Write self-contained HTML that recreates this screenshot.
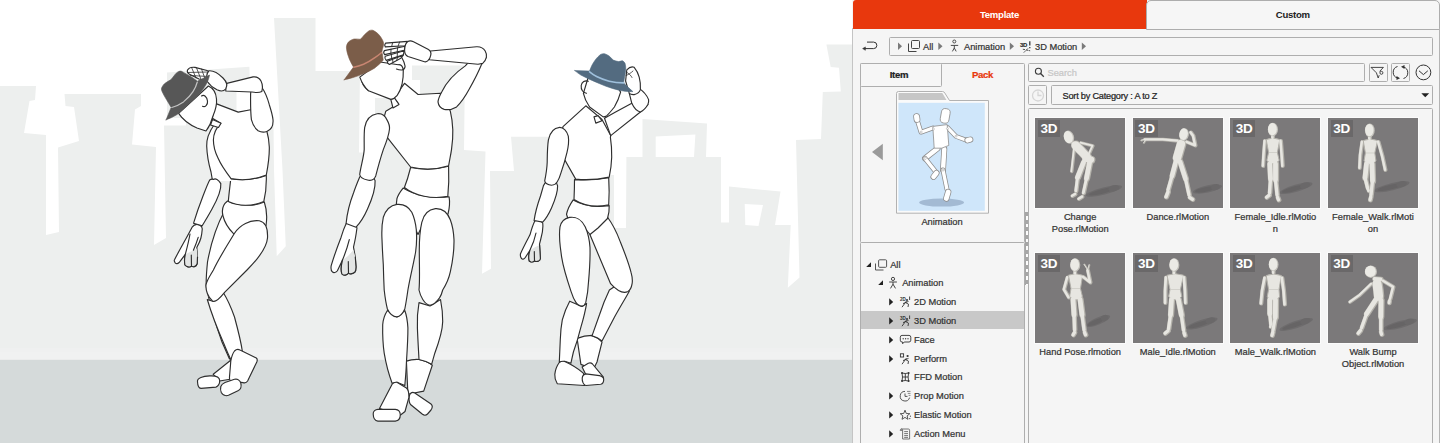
<!DOCTYPE html>
<html lang="en">
<head>
<meta charset="utf-8">
<title>Content Manager</title>
<style>
*{box-sizing:border-box;margin:0;padding:0}
html,body{width:1440px;height:443px;overflow:hidden;background:#fff;font-family:"Liberation Sans",Arial,sans-serif;font-size:11px;color:#333}
#stage{position:absolute;left:0;top:0;width:1440px;height:443px;overflow:hidden}
#scene{position:absolute;left:0;top:0;width:852px;height:443px}
#panel{position:absolute;left:852px;top:0;width:588px;height:443px;background:#f5f5f5;}
.abs{position:absolute}
.tab{position:absolute;top:0;height:29px;line-height:29px;text-align:center;font-weight:bold;font-size:9.6px;letter-spacing:-0.3px}
#tabT{left:0.5px;width:294px;background:#e8380d;color:#fff;border-radius:3px 0 0 0}
#tabC{left:294px;width:293.5px;height:30px;background:#f6f6f6;color:#222;border:1px solid #adadad;border-radius:5px 5px 0 0;line-height:27px}
.box{position:absolute;border:1px solid #aeaeae;background:#f5f5f5;border-radius:1.5px}
.t{position:absolute;white-space:nowrap;line-height:14px;height:14px;font-size:9.3px;letter-spacing:-0.02px;-webkit-text-stroke:0.22px currentColor}
.bd{font-weight:bold;font-size:9.6px;letter-spacing:-0.3px}
.row{position:absolute;left:8px;width:164px;height:18px}
.lbl{position:absolute;width:98px;text-align:center;line-height:11.7px;font-size:9.3px;color:#333;margin-top:0.5px;-webkit-text-stroke:0.22px currentColor}
.th{position:absolute;width:90px;height:89.6px;background:#7b797a;overflow:hidden;outline:1px solid #fbfbfb}
.th b{position:absolute;left:2.5px;top:1.8px;width:22.3px;height:17.6px;background:#6a6869;color:#fff;font-size:13.5px;line-height:18.8px;text-align:center;font-weight:bold;letter-spacing:-0.3px}
</style>
</head>
<body>
<div id="stage">
<!-- SCENE -->
<svg id="scene" width="852" height="443" viewBox="0 0 852 443">
<rect width="852" height="443" fill="#fff"/>
<!--SKYLINE-->
<path fill="#edefee" d="M0,86 L36,86 L35,100 L29.5,101 L24,133 L46,135 L46,235 L59,232 L58,147.5 L79,141 L74,107 L65.5,106 L64.5,94 L141,94 L141,106 L135,109.5 L132,144.5 L156,147 L154,245 L166,238 L164,125.5 L186,125.5 L186,118 L167,118 L167,72.4 L249.4,66.7 L249.8,86 L236.5,86 L236.5,125 L273.5,125 L274,170 L276.75,256.25 L285.75,246.25 L282.5,170 L274,18 L315.5,18 L315.5,71 L360,71 L359,152.5 L375,152.5 L375,98 L420,98 L420,80 L412,80 L412,65.5 L465,65.5 L464,150 L485.5,151.4 L482,273.75 L491,268.75 L490,171 L514,171 L511,136.7 L600,136.7 L600,175 L614,175 L614,228 L626,228 L626.4,157 L642.5,157 L642.5,119 L707,123.5 L706,157 L721,157 L721,222.5 L729,222.5 L729,186.5 L780.5,191.6 L775,225 L790.7,225 L787.8,287.7 L799.5,277.4 L796,140 L821,139 L822.8,92 L840.8,91.5 L839,67.7 L830.7,67 L826.4,44.6 L852,44.6 L852,360 L0,360 Z"/>
<path fill="#fff" d="M655.7,136.5 L695.4,134.5 L694,157 L655.7,157 Z M744.7,204 L763,205 L758.5,226 L745.3,225 Z"/>
<rect x="0" y="348" width="852" height="3.5" fill="#eff0f0"/><rect x="0" y="351.5" width="852" height="9" fill="#f0f1f1"/><rect x="0" y="359.8" width="852" height="84" fill="#d5dada"/>
<!--/SKYLINE-->
<!--FIGURES-->
<!--F1--><g id="fig1" fill="#fff" stroke="#2e2e2e" stroke-width="1.15" stroke-linejoin="round" stroke-linecap="round">
<!-- back leg -->
<path d="M224,212 C217,225 211,243 207.5,262 C206.5,272 206,280 206.2,286 L214,300 L240,260 L235,230 Z"/>
<path d="M206.3,287 C209,300 214,320 222,342 L229.5,359 L236,352 L224,295 Z"/>
<path d="M231,360 L213.2,374.3 L219.6,381 L231.5,379 Z"/>
<path d="M197.5,381.5 C197,377.8 203,376.2 209.7,375.9 C215,375.6 219.5,377 219.7,380.5 C219.9,384 217.8,386.6 215.9,387.1 L201,388.4 C198.5,388.2 197.6,384.5 197.5,381.5 Z"/>
<!-- pelvis, abdomen -->
<path d="M227.5,201 C223,204.5 221.5,210 223,216 C225,224 229,229 233.3,233.3 L238,238 L262,228 L266,226 C267.2,218 267,210 264.3,202 C255,206.5 240,206.5 227.5,201 Z"/>
<path d="M230.8,178.6 C245,181 256,179 266.3,175.4 C266.6,185 265.6,194 263.8,201.5 C252,206.8 238,206.3 228.3,201.5 C229,193 230,186 230.8,178.6 Z"/>
<!-- front leg -->
<path d="M207.3,299.5 L213.5,301.5 L223.5,293 C228,300 232,310 234.5,317 C238,330 241,342 242.3,351 L231,360 C228,354 226,349 224,344 C217,328 211,312 207.3,299.5 Z"/>
<path d="M234.5,233.3 C240,225 250,219.8 259.3,220.8 C265,222 268,228 267.5,238 C266.5,250 255,262 247,270 L224.6,292.3 C220,298 215,302.8 212.5,301 C208,297.5 205.5,290 206,284.8 C207,280 210,276 213.4,270 C219,258 228,244 234.5,233.3 Z"/>
<path d="M234.5,351 C236,349.5 238.5,349.2 240,350 L256.3,358 C257.5,359 257.4,360.5 256.8,362 L247.6,381 C246.6,382.6 245,383.2 243,382.6 L231,381 C229.6,380.5 229.3,379 229.5,377 L230.8,361 C231.5,357 233,353 234.5,351 Z"/>
<path d="M220.8,386.5 C221.5,384.5 223,383.4 225,382.5 L234.5,379.3 C237.5,378.5 240,380.4 240.8,383 C241.5,386 241,389 238.5,390.5 L228.5,395.3 C225.5,396.4 222.5,395 221.3,392.5 C220.5,390.5 220.3,388.5 220.8,386.5 Z"/>
<!-- hanging upper arm (behind chest) -->
<path d="M214,125 C209,132 206.5,140 206.7,146 C207,155 209,165 211,172 L212.5,181 L232,181 L222,160 L215,134 Z" stroke="none"/><path d="M214,125 C209,132 206.5,140 206.7,146 C207,155 209,165 211,172 L212.3,179.5" fill="none"/>
<!-- chest -->
<path d="M220.8,123.3 C216,128 213.5,133 213.4,140 C213.4,147 215,152 218,158 C221,165 226,172 231,178.6 C243,181 256,179 266.3,175 C268,166 269.5,155 269.3,147 C269,140 268,135 266.8,131 L258,112 L250.6,109.7 L238.2,112.1 L216,103.6 L212,118 Z"/>
<!-- hanging forearm & hand -->
<path d="M192.1,227.2 C194,224.5 197,223.8 199.5,225 C201.5,226 202.5,227.5 202.2,229.5 C202,232.5 201.5,235.5 200.9,238 C200,241.5 198.2,244.8 196.8,247.5 L197.5,257 L197.2,263.5 C196.5,266.5 193.5,267.3 191.5,266.3 C189.5,267.5 186.5,267 185,265 C184.2,262 184.5,258 185.3,254.3 L179.5,262.2 C178,264 176.2,264 175.2,262.8 C174.2,261.5 174,260.5 174.5,259.7 C180,249 186.5,238 192.1,227.2 Z"/>
<path d="M185.3,254.3 L191,251.5 L196.8,248.5 L197.5,257 L197.2,263.5 C196.5,266.5 193.5,267.3 191.5,266.3 C189.5,267.5 186.5,267 185,265 C184.2,262 184.5,258 185.3,254.3 Z" fill="#e3e5e4" stroke="none"/>
<path d="M190,234 C188.8,241 187,248 185.3,254.3 M198.2,237.3 C196.8,242 195,246.5 193.4,250.2 M191.3,255 L191.5,266.3 M185.3,254.3 C184.5,258 184.2,262 185,265 C186.5,267 189.5,267.5 191.5,266.3 C193.5,267.3 196.5,266.5 197.2,263.5 L197.5,257" fill="none"/>
<path d="M213.4,179.4 C215.5,178 218.5,179.5 220.8,183.6 C221.5,190 217,200 212,209 C208.5,215.5 205,221 202.2,225.8 L193.5,223.3 C196,215 199.5,205 203,196 C205.5,189.5 208,183 209.7,180 C211,179 212,179 213.4,179.4 Z"/>
<!-- neck, head -->
<path d="M212.5,119.5 L221,123.2 L218.5,127.5 L210.5,125 Z"/>
<path d="M178.6,113.4 C183,120 190,125 197,128 L206,131 C209,127 211.5,122 213,116 C215.5,110 217,104 216.5,99 C216,93 213,88 208.4,86 Z"/>
<path d="M201.5,96 C204,94 207,97 207.5,101 C208,105 205,107.5 202.5,106.3" fill="none"/>
<!-- raised arm -->
<path d="M250.6,94.8 C250.5,90 252,86.5 255,85 L261.8,87.3 C265,92 267.5,98 269.3,104.7 C271,110 272.5,115 273,119.6 C273.5,126 271,130 266.8,131.5 C263.5,132.6 260.5,132 258.1,130.8 C254.5,128 252.5,124 251.4,119.6 C250.5,112 250.5,103 250.6,94.8 Z"/>
<path d="M225.8,83.6 L253.1,76.9 C256.5,76.5 259.5,78 261,81 C262.5,84 262.8,88 261.8,91.5 C259,93 255,92.6 251.9,92 L225.8,91 Z"/>
<path d="M187.5,70 C189,67.6 192,67 195,67.4 L207,70.5 C209.5,71.5 210.2,74 209.2,76 L206,80.5 L199,79 L190,74.5 C188,73.5 187,71.5 187.5,70 Z"/>
<path d="M191.5,67.3 L196,78 M196.5,67.8 L201,79.3 M201.5,69 L205.5,80 M188,72.5 L207.5,72 M190.5,75.5 L208.5,76.5" fill="none" stroke-width="0.8"/>
<path d="M209,70.8 C213,70.5 219,74 223,78 C226.6,81.6 227.6,86 225.6,89 C223.6,91.5 220,91.2 217,89.8 C213,87.8 209.5,84.8 207.3,81.5 C206,79 206.5,73 209,70.8 Z"/>
<!-- hat -->
<path d="M166.1,119.8 L171.2,107.4 C168,102 164,96 162.1,91.6 C161.3,89.5 161.3,88.5 161.8,87.5 C162.5,86 163.5,84.5 164.5,83.7 C166.5,82 169,80.8 170.8,79.8 C172,78.5 173,77 174,75.8 C175.3,74 177,72.2 178.7,71.4 C179.8,71 181,71 181.9,71.4 C183.5,72.3 185,73.3 186.6,74.2 C188.5,75.2 190.3,76.3 192.2,77.4 L197.4,81.3 C201,79.5 205.5,77 209.5,75 C209,78.5 207.5,82 205.6,85.3 C203.8,88.3 201.5,91.2 199.3,94 C195.5,98.2 191,102.2 186.6,105.8 C183.5,108.8 180.3,111.8 177.1,114.5 C173.5,116.8 170,118.5 166.1,119.8 Z" fill="#575757" stroke="#575757" stroke-width="0.6"/>
<path d="M197.3,82 C196.5,85 195,88.5 193,91.6 C190.5,95.5 187,99 183.5,101.9 C180,104.3 176,106.2 171.8,107.5" fill="none" stroke="#c4c4c4" stroke-width="1.2"/>
</g>
<!--/F1-->
<!--F2--><g id="fig2" fill="#fff" stroke="#2e2e2e" stroke-width="1.15" stroke-linejoin="round" stroke-linecap="round">
<!-- pelvis, abdomen -->
<path d="M403.1,188.1 C400,192 397.5,196 396.9,199 C396,203 396,208 397,212 L412,222 L418,234.5 L424,222 L448,214 C449.5,208 450,202 449.1,196.8 C434,199 416,196 403.1,188.1 Z"/>
<path d="M410.6,167.5 C423,170 437,169.5 448.6,166.3 C449,176 448.8,187 447.8,196.4 C432,199.5 415,196 404.4,187.5 C407,181 409,174 410.6,167.5 Z"/>
<!-- back (right) leg -->
<path d="M406.4,361.1 C410,359.8 415,359.3 419,359.5 C424,360.5 429,362.5 432.3,365.2 L423.7,391.1 L407.9,394.3 Z"/>
<path d="M409.8,394.5 C411,392.5 413,392 414.8,393 L431,404 C432.6,405.5 432.4,408 431,410 L427.5,414 C426,415.5 424,415.4 422.5,414.3 L410.5,404.5 C408.8,402.5 408.6,397 409.8,394.5 Z"/>
<path d="M419,302.6 C417.5,311 417,320 417.4,327.9 C417.8,339 418.5,350 419,359.5 C424,360.5 428.5,362.3 431.6,364.3 L434.8,353.2 C439,342 442.5,331 442.7,321.6 C442.8,314 441.8,306 440.5,299.5 L430,306 Z"/>
<path d="M435.4,208.6 C428,209.5 423.5,215 421.8,222.3 C420,230 419.3,240 419.3,250 C419.3,265 420,280 419,290 C420,294.5 421.5,297.5 422.8,299.5 C425,303 427.5,305 430,305.2 C433.5,305 437,301.5 439.5,297.9 C441,295.5 442,293 442.7,290 C446.5,284 449,278 450.3,271.9 C452.5,262 454.2,250 454,239.6 C453.6,232 452.3,225 450.3,219.8 C447.5,212.5 442,208.2 435.4,208.6 Z"/>
<!-- front (left) leg -->
<path d="M387.4,310.5 C384.5,315 383,320 382.7,324.8 C382.5,335 383,345 384.2,353.2 C386,364 389,375 392.1,383.2 L397,382.2 L404.8,385.5 C405.5,378 406.2,370 406.4,362.7 C407.2,350 408,338 407.9,327.9 C407.5,321 406.5,315 404.8,310.5 L396.9,317 Z"/>
<path d="M396.9,204.4 C390,205.5 385.5,210.5 383.3,217.3 C381.8,224 381.6,232 382,239.6 C382.3,248 382.8,257 383.3,264.5 C383.5,273 383.8,282 384.2,290 C385,297 386,303.5 387.4,309 C389.5,313.5 393,316.8 396.9,316.9 C400.5,316.5 403,313 404.8,309 C406,303 407,296.5 407.9,290 C410,277.5 413.5,264 415.6,252 C416.8,244 416.8,236.5 416.3,229.7 C415.5,222.5 413.8,216.5 411.8,212.3 C408.5,206.5 403,203.8 396.9,204.4 Z"/>
<path d="M392.1,384.2 C393.5,382.5 395.3,382 396.9,382.3 L406.4,388 C408.2,389.5 409,393.5 408.9,397.4 L405,411.5 L400.5,415 L379.5,408.5 Z"/>
<path d="M373.2,414 C373,411.2 375.5,409.5 377.9,409.4 L395.3,409.4 C398.3,409.6 400.2,412 400.3,414.8 C400.3,418 398.5,420.8 395.3,421.1 L377.9,421.1 C375,420.8 373.3,417.5 373.2,414 Z"/>
<!-- chest -->
<path d="M398.2,103.7 L385.8,111.2 L382,125 L387,137.2 L410.6,167 C423,170 437,169.5 448.6,165.8 C450,158 451.2,152 451.5,149.6 C452.5,143 453,136 452.8,129.8 C452.5,123 451.5,116 450.3,111.2 L444,96 L440.5,93.3 L418.1,94.5 L404.5,83.3 L394,98 Z"/>
<!-- hanging arm -->
<path d="M346.1,223.8 C349,222 353,222.8 355.5,225 C357,226.5 357.2,228 356.7,229.7 C356,236 354.8,241.5 353.5,247.1 L355.3,257 L356,266.9 C356,270 355.5,271.5 354.7,272.3 C352.5,274 350,274 348.5,273.2 C346.5,275.5 343.5,275.8 342,274 C340.8,271 341.2,265 342.5,260 L337.4,270.7 C336,272.8 333.5,273 332.4,271.9 C331,270.5 330.8,268 331.2,265.7 C334,256 337.5,246.5 341.1,237.2 C342.5,232.5 344,228 346.1,223.8 Z"/>
<path d="M342.5,260 L348,256 L353.5,250 L355.3,257 L356,266.9 C356,270 355.5,271.5 354.7,272.3 C352.5,274 350,274 348.5,273.2 C346.5,275.5 343.5,275.8 342,274 C340.8,271 341.2,265 342.5,260 Z" fill="#e3e5e4" stroke="none"/>
<path d="M349.3,239.6 C347.5,247 345,254 342.5,260 M348.3,261.5 L348.5,273.2 M342.5,260 C341.2,265 340.8,271 342,274 C343.5,275.8 346.5,275.5 348.5,273.2 C350,274 352.5,274 354.7,272.3 C355.5,271.5 356,270 356,266.9 L355.3,257" fill="none"/>
<path d="M367.2,174 C369.5,173 373,175 375.1,180.7 C375.5,187 372,199 367.5,209 C364,217 360,223 356,227.2 L346.1,223.5 C347,214 350,202 353.5,193 C355.5,187 358,181 359.7,177 C361.5,174.5 364.5,173.5 367.2,174 Z"/>
<path d="M377.1,113.7 C381.5,113 385,115.5 387,119.9 C389,123.5 389.8,126 389.5,129 C388.8,136 386,143 383.3,149.6 C380.5,158 378,167 375.8,175.7 C374.5,179.5 371,181 367.5,180 C363,179 360,176.5 359.7,174.5 C360.8,166 363.8,157 364.2,149.6 C364.3,142 363.8,134 364.7,127.3 C366,120 370.5,114.8 377.1,113.7 Z"/>
<!-- neck, head -->
<path d="M390.8,99.4 L394.6,98.2 L399,104.4 L393,108 Z"/>
<path d="M361.8,81.6 C363,85 365.5,88.5 368.5,90.7" fill="none"/>
<path d="M359.8,77.1 C361.5,82 364.5,87 368.5,90.7 L390.8,99.4 C393.5,99 395.5,97.5 397,95.7 C399.5,92 401,88.5 402,84.5 C403,79.5 403.5,74.5 403.3,69.6 C402.5,66 400.5,64.5 398.3,64.7 L380,62 Z"/>
<path d="M401.9,57.7 C403.5,60.5 404.8,63.5 405.1,66.3 C405,68.5 403.8,69.6 402.4,69.9 C400.3,70.1 398.2,69.7 396.5,69" fill="none"/>
<!-- raised arm -->
<path d="M465.3,65.9 C455,73 446,83 441.7,92 C439.5,96 438.3,99 438,101.9 C438.5,106 441,108.5 444.2,109.4 C448.5,110.2 453,109 456.6,106.9 C461.5,102 465.5,96 469,89.5 C473.5,81.5 478,73 481.4,64.7 L486.4,57.2 L478,52 Z"/>
<path d="M430.6,51 L476.5,46.8 C480,46.6 483.5,48.2 485.2,51 C486.6,53.5 486.8,55.5 486.4,57.2 C485.8,60 484.5,62 482.7,63.4 L478,64.2 L429.3,59.7 Z"/>
<path d="M407.5,41.4 L385.6,43.1 Q383.9,45.0 385.3,46.9 L405.3,45.7 Z"/><path d="M399.6,42.0 L398.1,46.1" fill="none" stroke-width="0.9"/><path d="M392.6,42.6 L391.7,46.5" fill="none" stroke-width="0.9"/><path d="M405.1,46.2 L384.4,50.6 Q382.9,52.6 384.6,54.6 L404.3,50.3 Z"/><path d="M397.6,47.8 L397.2,51.8" fill="none" stroke-width="0.9"/><path d="M391.0,49.2 L390.9,53.2" fill="none" stroke-width="0.9"/><path d="M404.2,50.7 L385.2,56.2 Q384.1,58.3 386.2,60.4 L403.4,54.9 Z"/><path d="M397.4,52.7 L397.2,56.9" fill="none" stroke-width="0.9"/><path d="M391.3,54.4 L391.7,58.6" fill="none" stroke-width="0.9"/><path d="M403.2,55.3 L387.4,61.2 Q386.8,62.8 389.4,64.4 L400.8,58.2 Z"/><path d="M397.5,57.4 L396.7,60.4" fill="none" stroke-width="0.9"/><path d="M392.5,59.3 L393.0,62.4" fill="none" stroke-width="0.9"/>
<path d="M407.8,41.5 C409.5,40.6 411.5,40.8 413.5,41.8 L428,49.3 C430.5,50.8 431.3,53 430.8,55 C430.3,57.5 429.3,59.8 427.7,60.9 C426.5,61.9 425.5,62 424.5,61.7 L408,56.5 C405.5,55.3 404.5,52.5 404.6,50 C404.7,46.5 405.8,43 407.8,41.5 Z"/>
<!-- hat -->
<path d="M344.2,79.8 L353.5,67.1 C351.5,63.5 349.5,60 348.4,56.4 C347.2,53 346.5,50 346.4,46.9 C346.6,45 347.3,43.3 348.4,42.1 C350,40.5 352,39.5 354,39 C356,38.7 358.3,39.2 360.3,39.3 C361.8,38 363,36.4 364.2,35 C365.8,33.5 367.3,32 369,30.8 C370.3,30.1 371.7,30 372.9,30.3 C375,31.2 376.9,32.6 378.5,34.2 C380,35.8 381.3,37.7 382.4,39.8 C383.1,41 383.5,42.3 383.7,43.7 C383.6,45.6 383,47.4 382.4,49.2 L381.8,52.4 L382.4,54 L383.2,60.3 C380.5,63.2 377.6,65.8 374.5,68.2 C371,70.3 367.3,72.2 363.5,73.8 C359.9,75.3 356.2,76.6 352.4,77.7 C349.7,78.5 347,79.2 344.2,79.8 Z" fill="#7b5d49" stroke="#7b5d49" stroke-width="0.6"/>
<path d="M353.8,67.2 C357.2,66.5 360.4,65.5 363.5,64.3 C367.4,62.6 371,60.4 374.5,57.9 C377,56.2 379.5,54.4 381.7,52.5" fill="none" stroke="#c98672" stroke-width="1.5"/>
</g>
<!--/F2-->
<!--F3--><g id="fig3" fill="#fff" stroke="#2e2e2e" stroke-width="1.15" stroke-linejoin="round" stroke-linecap="round">
<!-- back (right) leg -->
<path d="M577.1,338.4 C582,336.5 587,335.5 592,335.4 C596,336.8 599.5,339.3 602,342.1 L597,362 L593.3,369.4 L580.9,364.4 Z"/>
<path d="M582.1,366.9 L588.3,363.2 C590,362.5 591.5,363 592.5,364 L603.2,376.8 C603.8,378.5 603.5,380.5 602,381.8 L590,383 Z"/>
<path d="M609.4,290 C605.5,298 602,307 599.5,314.8 C597,322 594.5,329 592,335.9 C596,336.8 599.5,338.8 602,340.9 L614.4,317.3 C619.5,308 625,299 629.3,291.2 L620,283 Z"/>
<path d="M607.4,217 C612.5,224 617,233 620,241.1 C624,251 628.5,262 631.1,272.7 C632.3,277 632.6,281 632.1,283.7 C631.5,287.5 630,290.3 628,291.6 C625,293 621.5,292.3 618.5,290.5 C615.5,288.5 612.5,286 610.6,283.7 L590,234.8 L594,214 Z"/>
<!-- pelvis, abdomen -->
<path d="M573.2,199.9 C570,204.5 567.5,209.5 566.5,214.3 L569,222 L583,226 L590,234.5 L598,228 L607.5,218.5 C608.8,214 609.4,209.5 609.2,205.6 C596,207.5 583,205.5 573.2,199.9 Z"/>
<path d="M574.5,179.6 C586,180.5 598,179.5 608.7,177.6 C609.3,187 609.3,196 608.7,204.8 C597,207.3 584,205.8 574,199.4 C574.3,193 574.5,186 574.5,179.6 Z"/>
<!-- front (left) leg -->
<path d="M569.7,301.2 C566.5,307 564,313.5 562.3,319.8 C561,326.5 560.5,333 560.3,339.6 L559.3,362 L564.7,361.2 L570.9,363.2 L573.4,352 C576.5,343.5 579,335 580.9,327.2 C583.3,319 585.3,311 586.6,303.6 L582,306.5 Z"/>
<path d="M569.5,217.4 C564.5,218.5 561,222 560,226.9 C559.3,232 559.5,240 560.3,247 C560.8,251 561.2,254 561.6,256.9 C563.5,269 567.5,281 571.1,291.6 C572.5,296 574,299.5 575.9,302.4 C577.5,304.8 579.5,306 582.1,306.1 C584,305.8 585.2,304.3 585.8,302.4 C587.2,296 588.2,289 588.5,282.1 C589.5,271 590.3,258 590,247.4 C589.5,240 587.8,232.5 585.3,226.9 C582,220 576,216.3 569.5,217.4 Z"/>
<path d="M559.3,362.5 C561,361.3 563,361 564.7,361.5 C571.5,364.5 578,368.5 583.3,373.1 L585,379 L584.6,385.5 L557.3,383.8 C555.5,381 554.6,377.5 554.8,374.4 C555.3,370 557,365.5 559.3,362.5 Z"/>
<path d="M582.2,378 C582.5,375.8 584,374.2 585.8,373.9 L599.5,375.6 C602,376.2 603.5,377.5 603.7,379.3 C603.8,381.8 602.8,383.8 600.7,384.3 L585.8,385.5 C583.5,385 582,381.5 582.2,378 Z"/>
<!-- chest -->
<path d="M585.8,105.8 L563,126.6 L560,140 L563.3,157.2 L575.7,179.1 C587,180.3 598,179.5 609.2,177.1 C610.5,171 611.5,164 611.7,157.2 C611.8,150 611.3,143 610.4,137.4 L610.7,135.6 L602,119.4 Z"/>
<!-- hanging arm -->
<path d="M534.8,221 C537.5,219.8 541,220.8 542.7,223 C543.3,228 542.3,234 540.8,239 L539.5,244.2 L540.4,258.5 C540,260.3 539.3,260.8 538.5,261 C536.8,261.8 535.5,261.5 534.5,261 C533,262.3 530.5,262.3 529.3,261 C528.5,258.5 528.8,254 529.8,250.5 L525.3,257.5 C524,259.5 522.3,259.5 521.5,258.5 C520.3,257.3 520.2,255.5 520.5,253.7 C523.5,247 527,240.5 530,234.8 C531.3,230 532.8,225 534.8,221 Z"/>
<path d="M529.8,250.5 L534.5,247.5 L539.6,245 L540.4,258.5 C540,260.3 539.3,260.8 538.5,261 C536.8,261.8 535.5,261.5 534.5,261 C533,262.3 530.5,262.3 529.3,261 C528.5,258.5 528.8,254 529.8,250.5 Z" fill="#e3e5e4" stroke="none"/>
<path d="M536,233 C534.8,239 532.5,245 529.8,250.5 M534.3,251.5 L534.5,261 M529.8,250.5 C528.8,254 528.5,258.5 529.3,261 C530.5,262.3 533,262.3 534.5,261 C535.5,261.5 536.8,261.8 538.5,261 C539.3,260.8 540,260.3 540.4,258.5 L539.6,245" fill="none"/>
<path d="M550.9,179.6 C553.5,179 556.3,181.5 557.6,185.8 C557.8,191 555,200 551.5,208 C548.8,214 545.8,219 542.7,222.1 L534.1,220.5 C535.3,212 538,203 540.5,196 C541.5,192.5 542.5,189 543.4,185.8 C545,182.3 548,180 550.9,179.6 Z"/>
<path d="M559.6,127.4 C563.5,127.3 567,131 568.3,136.1 C569,141 568.3,147 567,152.3 C565.3,159.5 563,167 560.8,173.4 C559.8,177 558.5,180 557.1,182 C555.5,184.8 552,185.8 549,184.8 C546.5,184 544.9,182.5 544.7,180.8 C546,174.5 547,168 547.2,162.2 C547.3,154.5 547.3,147 548.4,139.9 C549.8,133 553.5,128 559.6,127.4 Z"/>
<!-- raised arm -->
<path d="M604.5,118.2 L615.6,112 L631.8,103.3 L639,100 L647.9,104.5 L640.4,112 L610.7,135.6 Z"/>
<path d="M629.3,93.4 L631.8,103.3 C634,108 637.5,111.5 640.4,112 C643.5,110.5 646,107.8 647.9,104.5 C648.6,102.8 648.8,101.3 648.6,99.6 C647,95.5 643.5,91.5 639.2,88.4 Z"/>
<!-- neck, head -->
<path d="M594,116.9 L598,115.6 L602,120.7 L595.8,123.1 Z"/>
<path d="M583.4,93.4 C584.5,98.5 586.8,103 589.6,107 L603.2,116.9 C604.5,116.8 605.8,116.4 606.9,115.7 C609.5,113 612,110 614.4,107 C617,102.5 619.2,97.5 620.6,92.1 L616,84 L588,78 Z"/>
<path d="M588.3,81.2 C585,80 581.8,82 581.2,85.5 C580.8,89.5 583,92.8 586.5,93.2" fill="none"/>
<!-- hand on hat -->
<path d="M626.8,69.8 C629,67.5 632,66.5 634.2,67.3 C636.5,70 638.2,73.5 639.2,77.2 C640.2,81 640.7,85.5 640.4,89.6 C639.5,92 637,94 634.2,94.6 C632,94.8 630.5,94.5 629.3,93.4 L625.6,81 Z"/>
<path d="M626,75.5 C628.5,74.5 631,73 633,71 M627,72.5 C629,73.5 631,75.5 632,77.5" fill="none" stroke-width="0.8"/>
<!-- hat -->
<path d="M574.8,70.6 L589.5,71.1 C590.2,69.2 591,67.3 591.8,65.5 C593,63.3 594.3,61.2 595.8,59.2 C597.2,57.5 598.8,55.8 600.5,54.5 C601.8,53.8 603.2,53.5 604.5,53.7 C606.2,54.2 607.8,55.1 609.2,56.1 C610.6,57.3 611.8,58.8 613.2,60 C615,60.8 616.9,61.4 618.7,61.6 C620,61.4 621.4,60.8 622.6,60.8 C623.6,61.3 624.4,62.2 625,63.2 C625.5,65 625.8,66.8 625.8,68.7 C625.6,71.4 625.2,74 624.7,76.6 L623.7,82.1 L624.2,83.6 C627,86.4 630,89 632.9,91.6 C630.3,91.7 627.6,91.6 625,91.3 C620.7,90.7 616.5,89.7 612.4,88.4 C608,87.1 603.8,85.5 599.7,83.7 C596,82.2 592.3,80.6 588.7,78.9 C586,77.7 583.4,76.4 580.8,75 C578.7,73.7 576.7,72.2 574.8,70.6 Z" fill="#536b80" stroke="#536b80" stroke-width="0.6"/>
<path d="M589.6,71.9 C591.8,73.7 594.1,75.3 596.6,76.6 C600.6,78.6 604.8,80.2 609.2,81.3 C613.9,82.4 618.8,82.9 623.6,82.9" fill="none" stroke="#9fc0dc" stroke-width="1.7"/>
</g>
<!--/F3-->
</svg>
<!-- PANEL -->
<div id="panel">
<div class="tab" id="tabT">Template</div>
<div class="tab" id="tabC">Custom</div>
<!--PANELBODY-->
<div class="abs" style="left:0;top:28px;width:1px;height:420px;background:#c4c4c4"></div><div class="abs" style="left:586.5px;top:28px;width:1px;height:420px;background:#b4b4b4"></div>
<!-- back icon -->
<svg class="abs" style="left:8px;top:38px" width="20" height="16" viewBox="0 0 20 16"><path d="M4.5,10.6 H13.6 A3.25,3.25 0 0 0 13.6,4.1 H7" fill="none" stroke="#333" stroke-width="1"/><path d="M2.6,10.6 L5.4,8.9 V12.3 Z" fill="#333" stroke="#333" stroke-width="0.5"/></svg>
<!-- breadcrumb -->
<div class="box" style="left:37px;top:37px;width:544px;height:19px"></div>
<svg class="abs" style="left:37px;top:37px" width="260" height="19" viewBox="0 0 260 19">
<g fill="#7a7a7a"><path d="M9,5.6 L13,9.3 L9,13 Z"/><path d="M49.3,5.6 L53.5,9.3 L49.3,13 Z"/><path d="M120.8,5.6 L125,9.3 L120.8,13 Z"/><path d="M192.8,5.6 L197,9.3 L192.8,13 Z"/></g>
<g fill="none" stroke="#444" stroke-width="1"><rect x="22.5" y="3.5" width="8" height="8" rx="1"/><path d="M19.5,6.5 V14.5 H27.5"/></g>
<g fill="none" stroke="#4a4a4a" stroke-width="1"><circle cx="65.3" cy="4.5" r="1.5"/><path d="M61.8,8.4 H69.2 M65.3,8 V11.3 M65.3,11 L63.4,14.4 M65.3,11 L67.2,14.4"/></g>
<text x="131" y="10.4" font-size="6" font-weight="bold" fill="#2a2a2a" stroke="#2a2a2a" stroke-width="0.15" font-family="Liberation Sans, sans-serif" letter-spacing="-0.3">3D</text><g fill="none" stroke="#3a3a3a"><path d="M140.8,4.2 V8.6 M140.8,9.9 V11.2" stroke-width="1.3"/><path d="M139,11.4 L134.6,15.8 M137.2,13 L141.2,13.8 M136,12.6 L133.4,12.2" stroke-width="0.85" stroke-dasharray="2.2 0.5"/></g>
</svg>
<div class="t" style="left:71px;top:39.5px">All</div>
<div class="t" style="left:112px;top:39.5px">Animation</div>
<div class="t" style="left:183px;top:39.5px">3D Motion</div>
<!-- left column upper box -->
<div class="box" style="left:7.5px;top:63px;width:165.9px;height:180px"></div>
<div class="box" style="left:7.5px;top:63px;width:82.5px;height:24px;background:#f6f6f6"></div>
<div class="t bd" style="left:6px;top:68px;width:82px;text-align:center;color:#222">Item</div>
<div class="t bd" style="left:89px;top:68px;width:83px;text-align:center;color:#e8380d">Pack</div>
<svg class="abs" style="left:8px;top:87px" width="166" height="154" viewBox="860 87 166 154">
<path d="M872,152 L882.8,143.8 V160.2 Z" fill="#9a9a9a"/>
<path d="M896.5,213.2 V93.5 Q896.5,91.5 898.5,91.5 H942.5 Q944,91.5 944.8,93 L949.5,100.5 H988.5 V213.2 Z" fill="#fafafa" stroke="#b2b2b2" stroke-width="1"/>
<path d="M898.5,93 H942.3 L946.5,100 H898.5 Z" fill="#c6c6c6"/>
<rect x="898.4" y="102.8" width="86.4" height="108" fill="#cfe6fa"/>
<ellipse cx="941.6" cy="202.6" rx="22.5" ry="4" fill="#a3bad3"/>
<!--FOLDERFIG--><g fill="none" stroke-linecap="round" stroke-linejoin="round"><path d="M932.8,128 L921,132.2 L917.5,121" stroke="#8d8d8d" stroke-width="4.7"/><path d="M932.8,128 L921,132.2 L917.5,121" stroke="#fff" stroke-width="3.2"/><path d="M917,119.5 L916.6,116.5" stroke="#8d8d8d" stroke-width="6.7"/><path d="M917,119.5 L916.6,116.5" stroke="#fff" stroke-width="5.2"/><path d="M947.6,127.6 L956,136.4 L966.5,140.2" stroke="#8d8d8d" stroke-width="4.7"/><path d="M947.6,127.6 L956,136.4 L966.5,140.2" stroke="#fff" stroke-width="3.2"/><path d="M967.5,140.3 L970.3,139.6" stroke="#8d8d8d" stroke-width="6.1"/><path d="M967.5,140.3 L970.3,139.6" stroke="#fff" stroke-width="4.6"/><path d="M937.5,148.5 L925,158.4" stroke="#8d8d8d" stroke-width="5.9"/><path d="M937.5,148.5 L925,158.4" stroke="#fff" stroke-width="4.4"/><path d="M925,158.4 L935.5,171.5" stroke="#8d8d8d" stroke-width="4.9"/><path d="M925,158.4 L935.5,171.5" stroke="#fff" stroke-width="3.4"/><path d="M936.5,173 L933.5,176.8" stroke="#8d8d8d" stroke-width="6.1"/><path d="M936.5,173 L933.5,176.8" stroke="#fff" stroke-width="4.6"/><path d="M944.3,149 L943,170" stroke="#8d8d8d" stroke-width="5.9"/><path d="M944.3,149 L943,170" stroke="#fff" stroke-width="4.4"/><path d="M943,170 L947,189.5" stroke="#8d8d8d" stroke-width="4.9"/><path d="M943,170 L947,189.5" stroke="#fff" stroke-width="3.4"/><path d="M948.2,192 L946.3,198.5" stroke="#8d8d8d" stroke-width="6.3"/><path d="M948.2,192 L946.3,198.5" stroke="#fff" stroke-width="4.8"/></g><path d="M932.8,126.4 L947.2,124.6 L948.8,145.4 Q942,149.5 934.2,148.2 Z" fill="#fff" stroke="#8d8d8d" stroke-width="0.8" stroke-linejoin="round"/><rect x="940.8" y="108.6" width="8.8" height="14.6" rx="4" fill="#fff" stroke="#8d8d8d" stroke-width="0.8" transform="rotate(10 945.2 115.9)"/><g fill="#fff" stroke="#9a9a9a" stroke-width="0.5"><circle cx="921.2" cy="132" r="1"/><circle cx="956" cy="136.2" r="1"/><circle cx="925.2" cy="158.4" r="1.1"/><circle cx="943" cy="170" r="1.1"/><circle cx="947.4" cy="128.6" r="1"/><circle cx="933.4" cy="129" r="1"/></g><!--/FOLDERFIG-->
</svg>
<div class="t" style="left:40px;top:214.6px;width:100px;text-align:center">Animation</div>
<!-- tree box -->
<div class="box" style="left:7.5px;top:242px;width:165.9px;height:210px"></div>
<div class="abs" style="left:9px;top:311.4px;width:163.4px;height:17.7px;background:#c8c8c8"></div>
<!--TREE--><svg class="abs" style="left:13.6px;top:261.6px" width="6" height="6" viewBox="0 0 6 6"><path d="M5,0.2 V5 H0.2 Z" fill="#222"/></svg><svg class="abs" style="left:23.2px;top:257.6px;overflow:visible" width="12" height="14" viewBox="0 -7 12 14"><g fill="none" stroke="#555" stroke-width="1"><rect x="3.6" y="-5.2" width="8" height="7.5" rx="1"/><path d="M0.5,-1.5 V5 H8.5"/></g></svg><div class="t" style="left:38.2px;top:257.6px">All</div><svg class="abs" style="left:26.2px;top:280.4px" width="6" height="6" viewBox="0 0 6 6"><path d="M5,0.2 V5 H0.2 Z" fill="#222"/></svg><svg class="abs" style="left:37.0px;top:276.4px;overflow:visible" width="12" height="14" viewBox="0 -7 12 14"><g fill="none" stroke="#444" stroke-width="1"><circle cx="4" cy="-4.1" r="1.6"/><path d="M0.2,-1 H7.9 M4,-1 V1.6 M4,1.2 L1.5,5.4 M4,1.2 L6.5,5.4"/></g></svg><div class="t" style="left:50.2px;top:276.4px">Animation</div><svg class="abs" style="left:36.8px;top:298.2px" width="5" height="8" viewBox="0 0 5 8"><path d="M0.2,0.3 L4.2,3.9 L0.2,7.5 Z" fill="#222"/></svg><svg class="abs" style="left:48.0px;top:295.2px;overflow:visible" width="12" height="14" viewBox="0 -7 12 14"><text x="0" y="-1.5" font-size="4.6" font-weight="bold" fill="#333" font-family="Liberation Sans, sans-serif">2D</text><g fill="none" stroke="#333" stroke-width="0.9"><path d="M6.5,-1 L2,5.2 M5.5,0.5 L8.5,2.2 L8,5 M3,1.6 L8.5,-0.6 M9.6,-5.5 V-2"/></g><circle cx="7" cy="-2" r="1" fill="#333"/></svg><div class="t" style="left:62.0px;top:295.2px">2D Motion</div><svg class="abs" style="left:36.8px;top:317.0px" width="5" height="8" viewBox="0 0 5 8"><path d="M0.2,0.3 L4.2,3.9 L0.2,7.5 Z" fill="#222"/></svg><svg class="abs" style="left:48.0px;top:314.0px;overflow:visible" width="12" height="14" viewBox="0 -7 12 14"><text x="0" y="-1.5" font-size="4.6" font-weight="bold" fill="#333" font-family="Liberation Sans, sans-serif">3D</text><g fill="none" stroke="#333" stroke-width="0.9"><path d="M6.5,-1 L2,5.2 M5.5,0.5 L8.5,2.2 L8,5 M3,1.6 L8.5,-0.6 M9.6,-5.5 V-2"/></g><circle cx="7" cy="-2" r="1" fill="#333"/></svg><div class="t" style="left:62.0px;top:314.0px">3D Motion</div><svg class="abs" style="left:36.8px;top:335.8px" width="5" height="8" viewBox="0 0 5 8"><path d="M0.2,0.3 L4.2,3.9 L0.2,7.5 Z" fill="#222"/></svg><svg class="abs" style="left:48.0px;top:332.8px;overflow:visible" width="12" height="14" viewBox="0 -7 12 14"><g fill="none" stroke="#444" stroke-width="1"><path d="M2,-4.6 H9 Q10.8,-4.6 10.8,-2.8 V0.2 Q10.8,2 9,2 H4.2 L2.6,3.8 V2 H2 Q0.3,2 0.3,0.2 V-2.8 Q0.3,-4.6 2,-4.6 Z"/></g><g fill="#444"><circle cx="3.2" cy="-1.3" r="0.7"/><circle cx="5.6" cy="-1.3" r="0.7"/><circle cx="8" cy="-1.3" r="0.7"/></g></svg><div class="t" style="left:62.0px;top:332.8px">Face</div><svg class="abs" style="left:36.8px;top:354.6px" width="5" height="8" viewBox="0 0 5 8"><path d="M0.2,0.3 L4.2,3.9 L0.2,7.5 Z" fill="#222"/></svg><svg class="abs" style="left:48.0px;top:351.6px;overflow:visible" width="12" height="14" viewBox="0 -7 12 14"><g fill="none" stroke="#333" stroke-width="0.9"><rect x="0.4" y="-5.2" width="3.2" height="3.2"/><path d="M6.5,-1 L2,5.2 M5.5,0.5 L8.5,2.2 L8,5 M3,1.6 L8.5,-0.6"/></g><circle cx="7.6" cy="-3" r="1.1" fill="#333"/></svg><div class="t" style="left:62.0px;top:351.6px">Perform</div><svg class="abs" style="left:48.0px;top:370.4px;overflow:visible" width="12" height="14" viewBox="0 -7 12 14"><g fill="none" stroke="#333" stroke-width="0.9"><path d="M2,-4 Q3,0 2,4 M8.6,-4 Q7.6,0 8.6,4 M2,-4 Q5.3,-3 8.6,-4 M2,4 Q5.3,3 8.6,4 M5.3,-3.6 V3.6 M2.5,0 H8.1"/></g><g fill="#333"><circle cx="2" cy="-4" r="1"/><circle cx="8.6" cy="-4" r="1"/><circle cx="2" cy="4" r="1"/><circle cx="8.6" cy="4" r="1"/></g></svg><div class="t" style="left:62.0px;top:370.4px">FFD Motion</div><svg class="abs" style="left:36.8px;top:392.3px" width="5" height="8" viewBox="0 0 5 8"><path d="M0.2,0.3 L4.2,3.9 L0.2,7.5 Z" fill="#222"/></svg><svg class="abs" style="left:48.0px;top:389.3px;overflow:visible" width="12" height="14" viewBox="0 -7 12 14"><g fill="none" stroke="#555" stroke-width="1"><path d="M5,-4.6 A4.8,4.8 0 1 0 9.6,1.6"/><path d="M5,-2.5 V0.4 H7.5"/><path d="M7,-4.6 H10.5 M7.8,-2.6 H10.5 M8.6,-0.6 H10.5" stroke="#888"/></g></svg><div class="t" style="left:62.0px;top:389.3px">Prop Motion</div><svg class="abs" style="left:36.8px;top:411.1px" width="5" height="8" viewBox="0 0 5 8"><path d="M0.2,0.3 L4.2,3.9 L0.2,7.5 Z" fill="#222"/></svg><svg class="abs" style="left:48.0px;top:408.1px;overflow:visible" width="12" height="14" viewBox="0 -7 12 14"><g fill="none" stroke="#444" stroke-width="0.9"><path d="M5,-4.8 L6.3,-1.5 L9.8,-1.3 L7.1,0.9 L8,4.3 L5,2.4 L2,4.3 L2.9,0.9 L0.2,-1.3 L3.7,-1.5 Z"/></g><g fill="#444"><circle cx="9.8" cy="3.6" r="0.7"/><circle cx="10.4" cy="1.2" r="0.6"/></g></svg><div class="t" style="left:62.0px;top:408.1px">Elastic Motion</div><svg class="abs" style="left:36.8px;top:429.9px" width="5" height="8" viewBox="0 0 5 8"><path d="M0.2,0.3 L4.2,3.9 L0.2,7.5 Z" fill="#222"/></svg><svg class="abs" style="left:48.0px;top:426.9px;overflow:visible" width="12" height="14" viewBox="0 -7 12 14"><g fill="none" stroke="#666" stroke-width="0.9"><path d="M1,-5 H8.4 Q9.6,-5 9.6,-3.8 V5 H2.6 V-3.8 Q2.6,-5 1.4,-5 Q0.2,-5 0.2,-3.6 H2.6"/><path d="M4.2,-2.4 H8 M4.2,-0.4 H8 M4.2,1.6 H8 M4.2,3.4 H8"/></g></svg><div class="t" style="left:62.0px;top:426.9px">Action Menu</div><!--/TREE-->
<!-- splitter -->
<div class="abs" style="left:172.6px;top:212.4px;width:4.4px;height:72.5px;background:linear-gradient(90deg,#a6a6a6 0 0.7px,rgba(0,0,0,0) 0.7px 3.7px,#a6a6a6 3.7px),repeating-linear-gradient(#a6a6a6 0 4.2px,#fcfcfc 4.2px 7.52px)"></div>
<!-- search -->
<div class="box" style="left:175.6px;top:63px;width:337.2px;height:19px"></div>
<svg class="abs" style="left:181px;top:66px" width="14" height="14" viewBox="0 0 14 14"><circle cx="5.4" cy="5.3" r="3" fill="none" stroke="#3c3c3c" stroke-width="1.1"/><path d="M7.6,7.5 L10.8,10.7" stroke="#3c3c3c" stroke-width="1.3"/></svg>
<div class="t" style="left:195.5px;top:66px;color:#c6c6c6">Search</div>
<div class="box" style="left:517px;top:63px;width:19px;height:19px"></div>
<div class="box" style="left:539px;top:63px;width:19px;height:19px"></div>
<svg class="abs" style="left:517px;top:63px" width="70" height="19" viewBox="0 0 70 19">
<g fill="none" stroke="#333" stroke-width="0.9" stroke-linejoin="round"><path d="M2,4.4 H14.4 L10.6,8.4 M2,4.4 L7.4,9.8 L9.2,15 L10.2,12.2"/><circle cx="12.4" cy="9.8" r="1.5"/></g>
<g fill="none" stroke="#333" stroke-width="1"><path d="M28.5,3.5 A6,6 0 0 0 28.5,15"/><path d="M34.5,15.5 A6,6 0 0 0 34.5,4"/></g>
<path d="M27.5,13 L31,15.2 L27.5,17 Z M35.5,6 L32,3.8 L35.5,2 Z" fill="#333"/>
<circle cx="54.4" cy="9.4" r="7.4" fill="none" stroke="#333" stroke-width="1"/><path d="M50,7.8 L54.4,11.6 L58.8,7.8" fill="none" stroke="#333" stroke-width="1"/>
</svg>
<!-- sort -->
<div class="box" style="left:175.6px;top:85.4px;width:19.2px;height:19.6px"></div>
<svg class="abs" style="left:177px;top:86px" width="18" height="19" viewBox="0 0 18 19"><circle cx="9" cy="9.5" r="5.5" fill="none" stroke="#d6d6d6" stroke-width="1.3"/><path d="M9,5.5 V9.5 H12.5" fill="none" stroke="#d6d6d6" stroke-width="1.3"/></svg>
<div class="box" style="left:198.6px;top:85.4px;width:382.4px;height:19.6px"></div>
<div class="t" style="left:210.5px;top:88.5px;color:#222;font-size:9.2px;letter-spacing:-0.22px">Sort by Category : A to Z</div>
<svg class="abs" style="left:569px;top:92.5px" width="9" height="5" viewBox="0 0 9 5"><path d="M0.3,0.3 H8.2 L4.25,4.3 Z" fill="#222"/></svg>
<!-- grid -->
<div class="box" style="left:175.6px;top:108px;width:405.2px;height:345px"></div>
<!--GRID--><div class="th" style="left:183.2px;top:118.0px"><svg width="90" height="90" viewBox="0 0 90 90" style="position:absolute;left:0;top:0"><g transform="rotate(-14.0 69.0 73.0)"><ellipse cx="69.0" cy="73.0" rx="18.6" ry="3.6" fill="#6e6c6d"/><ellipse cx="67.0" cy="73.0" rx="13.4" ry="2.3" fill="#666465"/><ellipse cx="79.2" cy="72.7" rx="5.6" ry="3" fill="#6a6869"/></g><g fill="none" stroke="#b3b1aa" stroke-linecap="round" stroke-linejoin="round"><path d="M41.0,27.5 L47.0,33.5 L52.5,39.5" stroke-width="9.8"/><path d="M46.0,24.8 L58.0,27.8 L54.0,36.5" stroke-width="3.3"/><path d="M39.5,30.0 L38.3,40.5 L36.8,53.5" stroke-width="3.3"/><path d="M51.0,40.8 L56.5,41.8" stroke-width="7.9"/><path d="M49.0,44.5 L43.0,59.5" stroke-width="6.3"/><path d="M43.0,59.5 L41.3,73.0" stroke-width="4.4"/><path d="M55.0,45.0 L52.0,60.5" stroke-width="6.3"/><path d="M52.0,60.5 L48.8,75.0" stroke-width="4.4"/><path d="M40.5,76.2 L37.5,78.0" stroke-width="4.0"/><path d="M47.5,78.8 L44.0,81.0" stroke-width="4.0"/><path d="M36.8,23.5 L39.0,26.5" stroke-width="3.4"/></g><g fill="none" stroke="#e7e6e1" stroke-linecap="round" stroke-linejoin="round"><path d="M40.5,27.3 L46.5,33.3 L52.0,39.3" stroke-width="8.3"/><path d="M45.5,24.6 L57.5,27.6 L53.5,36.3" stroke-width="1.8"/><path d="M39.0,29.8 L37.8,40.3 L36.3,53.3" stroke-width="1.8"/><path d="M50.5,40.6 L56.0,41.6" stroke-width="6.4"/><path d="M48.5,44.3 L42.5,59.3" stroke-width="4.8"/><path d="M42.5,59.3 L40.8,72.8" stroke-width="2.9"/><path d="M54.5,44.8 L51.5,60.3" stroke-width="4.8"/><path d="M51.5,60.3 L48.3,74.8" stroke-width="2.9"/><path d="M40.0,76.0 L37.0,77.8" stroke-width="2.5"/><path d="M47.0,78.6 L43.5,80.8" stroke-width="2.5"/><path d="M36.3,23.3 L38.5,26.3" stroke-width="1.9"/></g><ellipse cx="33.9" cy="19.2" rx="5.1" ry="6.7" fill="#c2c0ba" transform="rotate(-18 33.9 19.2)"/><ellipse cx="33.4" cy="18.9" rx="4.3999999999999995" ry="6.1" fill="#ebeae5" transform="rotate(-18 33.9 19.2)"/></svg><b>3D</b></div><div class="lbl" style="left:179.2px;top:211.6px">Change<br>Pose.rlMotion</div><div class="th" style="left:280.8px;top:118.0px"><svg width="90" height="90" viewBox="0 0 90 90" style="position:absolute;left:0;top:0"><g transform="rotate(-11.7 74.5 71.0)"><ellipse cx="74.5" cy="71.0" rx="14.8" ry="3.6" fill="#6e6c6d"/><ellipse cx="72.5" cy="71.0" rx="10.7" ry="2.3" fill="#666465"/><ellipse cx="82.6" cy="70.7" rx="4.4" ry="3" fill="#6a6869"/></g><g fill="none" stroke="#b3b1aa" stroke-linecap="round" stroke-linejoin="round"><path d="M48.5,26.0 L46.5,33.0 L44.5,40.0" stroke-width="9.9"/><path d="M45.0,22.8 L30.0,21.5 L12.0,21.5" stroke-width="3.7"/><path d="M12.0,21.5 L8.5,22.5" stroke-width="2.1"/><path d="M13.0,22.0 L11.0,25.0" stroke-width="1.8"/><path d="M54.0,24.0 L62.5,27.5 L60.5,18.0 L58.0,14.5" stroke-width="4.0"/><path d="M43.5,43.0 L39.5,58.0" stroke-width="6.1"/><path d="M39.5,58.0 L35.5,72.0" stroke-width="4.8"/><path d="M35.5,74.0 L33.5,79.0" stroke-width="5.0"/><path d="M47.5,44.0 L53.0,61.0" stroke-width="6.1"/><path d="M53.0,61.0 L56.5,77.0" stroke-width="4.8"/><path d="M57.0,79.5 L60.0,81.5" stroke-width="4.8"/></g><g fill="none" stroke="#e7e6e1" stroke-linecap="round" stroke-linejoin="round"><path d="M48.0,25.8 L46.0,32.8 L44.0,39.8" stroke-width="8.4"/><path d="M44.5,22.6 L29.6,21.3 L11.6,21.3" stroke-width="2.2"/><path d="M11.6,21.3 L8.1,22.3" stroke-width="0.8"/><path d="M12.6,21.8 L10.6,24.8" stroke-width="0.8"/><path d="M53.5,23.8 L62.0,27.3 L60.0,17.8 L57.5,14.3" stroke-width="2.5"/><path d="M43.0,42.8 L39.0,57.8" stroke-width="4.6"/><path d="M39.0,57.8 L35.0,71.8" stroke-width="3.3"/><path d="M35.0,73.8 L33.0,78.8" stroke-width="3.5"/><path d="M47.0,43.8 L52.5,60.8" stroke-width="4.6"/><path d="M52.5,60.8 L56.0,76.8" stroke-width="3.3"/><path d="M56.5,79.3 L59.5,81.3" stroke-width="3.3"/></g><ellipse cx="51" cy="16.5" rx="4.9" ry="6.4" fill="#c2c0ba" transform="rotate(10 51 16.5)"/><ellipse cx="50.5" cy="16.2" rx="4.2" ry="5.8" fill="#ebeae5" transform="rotate(10 51 16.5)"/></svg><b>3D</b></div><div class="lbl" style="left:276.8px;top:211.6px">Dance.rlMotion</div><div class="th" style="left:378.4px;top:118.0px"><svg width="90" height="90" viewBox="0 0 90 90" style="position:absolute;left:0;top:0"><g transform="rotate(-16.1 66.0 70.2)"><ellipse cx="66.0" cy="70.2" rx="17.2" ry="3.6" fill="#6e6c6d"/><ellipse cx="64.0" cy="70.2" rx="12.4" ry="2.3" fill="#666465"/><ellipse cx="75.4" cy="70.0" rx="5.2" ry="3" fill="#6a6869"/></g><g fill="none" stroke="#b3b1aa" stroke-linecap="round" stroke-linejoin="round"><path d="M35.0,23.0 L34.0,36.0 L33.2,48.0" stroke-width="4.0"/><path d="M51.0,23.0 L52.0,36.0 L52.8,48.0" stroke-width="4.0"/><path d="M40.2,46.0 L41.0,61.0" stroke-width="6.3"/><path d="M41.0,61.0 L40.0,75.0" stroke-width="4.8"/><path d="M39.5,77.5 L37.0,79.5" stroke-width="4.8"/><path d="M46.0,46.0 L46.0,62.0" stroke-width="6.3"/><path d="M46.0,62.0 L47.5,77.0" stroke-width="4.8"/><path d="M48.0,79.5 L49.0,82.0" stroke-width="4.8"/><path d="M42.9,17.0 L42.9,20.0" stroke-width="4.0"/></g><path d="M36.2,21.5 Q43.0,18.5 49.8,21.5 L47.4,34.5 L49.2,42.5 Q43.0,49.5 36.8,42.5 L38.6,34.5 Z" fill="#e7e6e1" stroke="#b3b1aa" stroke-width="1" stroke-linejoin="round"/><path d="M39.1,34.5 L46.9,34.5" stroke="#c9c7c1" stroke-width="0.7"/><g fill="none" stroke="#e7e6e1" stroke-linecap="round" stroke-linejoin="round"><path d="M34.5,22.8 L33.5,35.8 L32.8,47.8" stroke-width="2.5"/><path d="M50.5,22.8 L51.5,35.8 L52.3,47.8" stroke-width="2.5"/><path d="M39.8,45.8 L40.5,60.8" stroke-width="4.8"/><path d="M40.5,60.8 L39.5,74.8" stroke-width="3.3"/><path d="M39.0,77.3 L36.5,79.3" stroke-width="3.3"/><path d="M45.5,45.8 L45.5,61.8" stroke-width="4.8"/><path d="M45.5,61.8 L47.0,76.8" stroke-width="3.3"/><path d="M47.5,79.3 L48.5,81.8" stroke-width="3.3"/><path d="M42.4,16.8 L42.4,19.8" stroke-width="2.5"/></g><ellipse cx="42.9" cy="11.5" rx="5.1" ry="6.800000000000001" fill="#c2c0ba" transform="rotate(0 42.9 11.5)"/><ellipse cx="42.4" cy="11.2" rx="4.3999999999999995" ry="6.2" fill="#ebeae5" transform="rotate(0 42.9 11.5)"/></svg><b>3D</b></div><div class="lbl" style="left:374.4px;top:211.6px">Female_Idle.rlMotio<br>n</div><div class="th" style="left:476.0px;top:118.0px"><svg width="90" height="90" viewBox="0 0 90 90" style="position:absolute;left:0;top:0"><g transform="rotate(-13.7 64.0 68.8)"><ellipse cx="64.0" cy="68.8" rx="18.0" ry="3.6" fill="#6e6c6d"/><ellipse cx="62.0" cy="68.8" rx="13.0" ry="2.3" fill="#666465"/><ellipse cx="73.9" cy="68.5" rx="5.4" ry="3" fill="#6a6869"/></g><g fill="none" stroke="#b3b1aa" stroke-linecap="round" stroke-linejoin="round"><path d="M34.3,24.0 L32.5,37.0 L31.8,50.0" stroke-width="4.0"/><path d="M50.6,24.0 L54.5,38.0 L57.5,52.0" stroke-width="4.0"/><path d="M39.0,46.0 L37.5,60.0" stroke-width="6.3"/><path d="M37.5,60.0 L40.0,70.0" stroke-width="4.8"/><path d="M40.0,70.0 L41.0,73.0" stroke-width="4.2"/><path d="M44.5,46.0 L45.0,63.0" stroke-width="6.3"/><path d="M45.0,63.0 L43.5,77.0" stroke-width="4.8"/><path d="M43.2,79.0 L42.5,82.0" stroke-width="4.8"/><path d="M41.8,18.0 L41.8,21.0" stroke-width="4.0"/></g><path d="M35.2,22.5 Q42.400000000000006,19.5 49.6,22.5 L46.8,35 L48,43 Q42.0,50 36,43 L37.4,35 Z" fill="#e7e6e1" stroke="#b3b1aa" stroke-width="1" stroke-linejoin="round"/><path d="M37.9,35 L46.3,35" stroke="#c9c7c1" stroke-width="0.7"/><g fill="none" stroke="#e7e6e1" stroke-linecap="round" stroke-linejoin="round"><path d="M33.8,23.8 L32.0,36.8 L31.4,49.8" stroke-width="2.5"/><path d="M50.1,23.8 L54.0,37.8 L57.0,51.8" stroke-width="2.5"/><path d="M38.5,45.8 L37.0,59.8" stroke-width="4.8"/><path d="M37.0,59.8 L39.5,69.8" stroke-width="3.3"/><path d="M39.5,69.8 L40.5,72.8" stroke-width="2.7"/><path d="M44.0,45.8 L44.5,62.8" stroke-width="4.8"/><path d="M44.5,62.8 L43.0,76.8" stroke-width="3.3"/><path d="M42.8,78.8 L42.0,81.8" stroke-width="3.3"/><path d="M41.3,17.8 L41.3,20.8" stroke-width="2.5"/></g><ellipse cx="41.8" cy="12.4" rx="4.9" ry="6.800000000000001" fill="#c2c0ba" transform="rotate(0 41.8 12.4)"/><ellipse cx="41.3" cy="12.1" rx="4.2" ry="6.2" fill="#ebeae5" transform="rotate(0 41.8 12.4)"/></svg><b>3D</b></div><div class="lbl" style="left:472.0px;top:211.6px">Female_Walk.rlMoti<br>on</div><div class="th" style="left:183.2px;top:253.1px"><svg width="90" height="90" viewBox="0 0 90 90" style="position:absolute;left:0;top:0"><g transform="rotate(-23.1 63.2 68.0)"><ellipse cx="63.2" cy="68.0" rx="12.8" ry="3.6" fill="#6e6c6d"/><ellipse cx="61.2" cy="68.0" rx="9.2" ry="2.3" fill="#666465"/><ellipse cx="70.3" cy="67.7" rx="3.8" ry="3" fill="#6a6869"/></g><g fill="none" stroke="#b3b1aa" stroke-linecap="round" stroke-linejoin="round"><path d="M32.6,24.5 L29.2,36.5 L34.0,44.5" stroke-width="4.0"/><path d="M48.4,24.0 L55.5,29.5 L53.0,17.5" stroke-width="4.0"/><path d="M52.5,16.0 L49.5,11.5" stroke-width="1.7"/><path d="M53.5,16.0 L54.5,12.0" stroke-width="1.7"/><path d="M38.5,46.5 L39.5,62.0" stroke-width="6.3"/><path d="M39.5,62.0 L40.0,77.0" stroke-width="4.8"/><path d="M40.0,79.5 L38.5,82.0" stroke-width="4.8"/><path d="M45.5,46.5 L47.5,62.0" stroke-width="6.3"/><path d="M47.5,62.0 L49.5,77.0" stroke-width="4.8"/><path d="M50.0,79.5 L51.0,82.0" stroke-width="4.8"/><path d="M40.2,17.5 L40.2,20.5" stroke-width="4.0"/></g><path d="M33.4,22.2 Q40.5,19.2 47.6,22.2 L45.5,35.5 L47.4,43.5 Q41.0,50.5 34.6,43.5 L36,35.5 Z" fill="#e7e6e1" stroke="#b3b1aa" stroke-width="1" stroke-linejoin="round"/><path d="M36.5,35.5 L45.0,35.5" stroke="#c9c7c1" stroke-width="0.7"/><g fill="none" stroke="#e7e6e1" stroke-linecap="round" stroke-linejoin="round"><path d="M32.1,24.3 L28.8,36.3 L33.5,44.3" stroke-width="2.5"/><path d="M47.9,23.8 L55.0,29.3 L52.5,17.3" stroke-width="2.5"/><path d="M52.0,15.8 L49.0,11.3" stroke-width="0.8"/><path d="M53.0,15.8 L54.0,11.8" stroke-width="0.8"/><path d="M38.0,46.3 L39.0,61.8" stroke-width="4.8"/><path d="M39.0,61.8 L39.5,76.8" stroke-width="3.3"/><path d="M39.5,79.3 L38.0,81.8" stroke-width="3.3"/><path d="M45.0,46.3 L47.0,61.8" stroke-width="4.8"/><path d="M47.0,61.8 L49.0,76.8" stroke-width="3.3"/><path d="M49.5,79.3 L50.5,81.8" stroke-width="3.3"/><path d="M39.8,17.3 L39.8,20.3" stroke-width="2.5"/></g><ellipse cx="40.2" cy="12" rx="5.1" ry="6.800000000000001" fill="#c2c0ba" transform="rotate(0 40.2 12)"/><ellipse cx="39.7" cy="11.7" rx="4.3999999999999995" ry="6.2" fill="#ebeae5" transform="rotate(0 40.2 12)"/></svg><b>3D</b></div><div class="lbl" style="left:179.2px;top:346.6px">Hand Pose.rlmotion</div><div class="th" style="left:280.8px;top:253.1px"><svg width="90" height="90" viewBox="0 0 90 90" style="position:absolute;left:0;top:0"><g transform="rotate(-17.6 68.8 70.5)"><ellipse cx="68.8" cy="70.5" rx="16.5" ry="3.6" fill="#6e6c6d"/><ellipse cx="66.8" cy="70.5" rx="11.9" ry="2.3" fill="#666465"/><ellipse cx="77.8" cy="70.2" rx="5.0" ry="3" fill="#6a6869"/></g><g fill="none" stroke="#b3b1aa" stroke-linecap="round" stroke-linejoin="round"><path d="M33.2,24.5 L32.5,38.0 L32.5,50.0" stroke-width="4.2"/><path d="M51.4,24.5 L52.4,38.0 L52.8,50.0" stroke-width="4.2"/><path d="M39.0,46.5 L38.0,62.0" stroke-width="6.3"/><path d="M38.0,62.0 L36.0,76.0" stroke-width="4.8"/><path d="M35.5,78.0 L32.5,80.5" stroke-width="4.8"/><path d="M45.8,46.5 L48.8,62.0" stroke-width="6.3"/><path d="M48.8,62.0 L51.0,77.5" stroke-width="4.8"/><path d="M51.5,80.0 L52.3,82.5" stroke-width="4.8"/><path d="M41.3,17.5 L41.3,20.5" stroke-width="4.0"/></g><path d="M34,22.2 Q42.3,19.2 50.6,22.2 L47.4,36.5 L48.8,43.5 Q42.2,50.5 35.6,43.5 L37,36.5 Z" fill="#e7e6e1" stroke="#b3b1aa" stroke-width="1" stroke-linejoin="round"/><path d="M37.5,36.5 L46.9,36.5" stroke="#c9c7c1" stroke-width="0.7"/><g fill="none" stroke="#e7e6e1" stroke-linecap="round" stroke-linejoin="round"><path d="M32.8,24.3 L32.0,37.8 L32.0,49.8" stroke-width="2.7"/><path d="M50.9,24.3 L51.9,37.8 L52.3,49.8" stroke-width="2.7"/><path d="M38.5,46.3 L37.5,61.8" stroke-width="4.8"/><path d="M37.5,61.8 L35.5,75.8" stroke-width="3.3"/><path d="M35.0,77.8 L32.0,80.3" stroke-width="3.3"/><path d="M45.3,46.3 L48.3,61.8" stroke-width="4.8"/><path d="M48.3,61.8 L50.5,77.3" stroke-width="3.3"/><path d="M51.0,79.8 L51.8,82.3" stroke-width="3.3"/><path d="M40.8,17.3 L40.8,20.3" stroke-width="2.5"/></g><ellipse cx="41.3" cy="12" rx="5.1" ry="6.800000000000001" fill="#c2c0ba" transform="rotate(0 41.3 12)"/><ellipse cx="40.8" cy="11.7" rx="4.3999999999999995" ry="6.2" fill="#ebeae5" transform="rotate(0 41.3 12)"/></svg><b>3D</b></div><div class="lbl" style="left:276.8px;top:346.6px">Male_Idle.rlMotion</div><div class="th" style="left:378.4px;top:253.1px"><svg width="90" height="90" viewBox="0 0 90 90" style="position:absolute;left:0;top:0"><g transform="rotate(-18.2 66.2 71.5)"><ellipse cx="66.2" cy="71.5" rx="17.6" ry="3.6" fill="#6e6c6d"/><ellipse cx="64.2" cy="71.5" rx="12.7" ry="2.3" fill="#666465"/><ellipse cx="75.9" cy="71.2" rx="5.3" ry="3" fill="#6a6869"/></g><g fill="none" stroke="#b3b1aa" stroke-linecap="round" stroke-linejoin="round"><path d="M35.0,25.0 L32.5,38.0 L31.2,50.5" stroke-width="4.2"/><path d="M52.3,25.0 L54.0,38.0 L55.0,51.5" stroke-width="4.2"/><path d="M40.2,47.0 L40.2,61.0" stroke-width="6.3"/><path d="M40.2,61.0 L41.2,71.0" stroke-width="4.8"/><path d="M41.2,71.0 L40.8,74.0" stroke-width="4.0"/><path d="M46.0,47.0 L45.8,64.5" stroke-width="6.3"/><path d="M45.8,64.5 L43.5,77.5" stroke-width="4.8"/><path d="M43.2,79.5 L42.5,82.5" stroke-width="4.8"/><path d="M43.6,17.0 L43.6,20.0" stroke-width="4.0"/></g><path d="M36.2,22.5 Q43.8,19.5 51.4,22.5 L49,36.5 L49.6,44 Q43.400000000000006,51 37.2,44 L38.6,36.5 Z" fill="#e7e6e1" stroke="#b3b1aa" stroke-width="1" stroke-linejoin="round"/><path d="M39.1,36.5 L48.5,36.5" stroke="#c9c7c1" stroke-width="0.7"/><g fill="none" stroke="#e7e6e1" stroke-linecap="round" stroke-linejoin="round"><path d="M34.5,24.8 L32.0,37.8 L30.8,50.3" stroke-width="2.7"/><path d="M51.8,24.8 L53.5,37.8 L54.5,51.3" stroke-width="2.7"/><path d="M39.8,46.8 L39.8,60.8" stroke-width="4.8"/><path d="M39.8,60.8 L40.8,70.8" stroke-width="3.3"/><path d="M40.8,70.8 L40.3,73.8" stroke-width="2.5"/><path d="M45.5,46.8 L45.3,64.3" stroke-width="4.8"/><path d="M45.3,64.3 L43.0,77.3" stroke-width="3.3"/><path d="M42.8,79.3 L42.0,82.3" stroke-width="3.3"/><path d="M43.1,16.8 L43.1,19.8" stroke-width="2.5"/></g><ellipse cx="43.6" cy="11.5" rx="4.9" ry="6.800000000000001" fill="#c2c0ba" transform="rotate(0 43.6 11.5)"/><ellipse cx="43.1" cy="11.2" rx="4.2" ry="6.2" fill="#ebeae5" transform="rotate(0 43.6 11.5)"/></svg><b>3D</b></div><div class="lbl" style="left:374.4px;top:346.6px">Male_Walk.rlMotion</div><div class="th" style="left:476.0px;top:253.1px"><svg width="90" height="90" viewBox="0 0 90 90" style="position:absolute;left:0;top:0"><g transform="rotate(-15.0 72.2 71.5)"><ellipse cx="72.2" cy="71.5" rx="17.3" ry="3.6" fill="#6e6c6d"/><ellipse cx="70.2" cy="71.5" rx="12.5" ry="2.3" fill="#666465"/><ellipse cx="81.8" cy="71.2" rx="5.2" ry="3" fill="#6a6869"/></g><g fill="none" stroke="#b3b1aa" stroke-linecap="round" stroke-linejoin="round"><path d="M49.5,31.0 L50.5,38.0 L51.0,43.5" stroke-width="10.6"/><path d="M43.5,31.0 L32.0,42.0 L22.0,49.0" stroke-width="3.7"/><path d="M55.5,28.0 L65.5,34.0 L62.5,46.0" stroke-width="4.0"/><path d="M61.8,48.0 L61.5,50.0" stroke-width="4.5"/><path d="M48.5,46.5 L39.0,61.0" stroke-width="6.3"/><path d="M39.0,61.0 L34.0,75.0" stroke-width="4.8"/><path d="M33.0,77.5 L30.5,80.5" stroke-width="4.8"/><path d="M53.5,47.5 L53.2,64.0" stroke-width="6.3"/><path d="M53.2,64.0 L53.2,77.0" stroke-width="4.8"/><path d="M53.2,79.0 L54.0,81.5" stroke-width="4.8"/><path d="M47.0,26.0 L53.0,26.5" stroke-width="5.3"/></g><g fill="none" stroke="#e7e6e1" stroke-linecap="round" stroke-linejoin="round"><path d="M49.0,30.8 L50.0,37.8 L50.5,43.3" stroke-width="9.1"/><path d="M43.0,30.8 L31.6,41.8 L21.6,48.8" stroke-width="2.2"/><path d="M55.0,27.8 L65.0,33.8 L62.0,45.8" stroke-width="2.5"/><path d="M61.3,47.8 L61.0,49.8" stroke-width="3.0"/><path d="M48.0,46.3 L38.5,60.8" stroke-width="4.8"/><path d="M38.5,60.8 L33.5,74.8" stroke-width="3.3"/><path d="M32.5,77.3 L30.1,80.3" stroke-width="3.3"/><path d="M53.0,47.3 L52.8,63.8" stroke-width="4.8"/><path d="M52.8,63.8 L52.8,76.8" stroke-width="3.3"/><path d="M52.8,78.8 L53.5,81.3" stroke-width="3.3"/><path d="M46.5,25.8 L52.5,26.3" stroke-width="3.8"/></g><ellipse cx="42.9" cy="18.7" rx="6.1" ry="6.2" fill="#c2c0ba" transform="rotate(0 42.9 18.7)"/><ellipse cx="42.4" cy="18.4" rx="5.3999999999999995" ry="5.6" fill="#ebeae5" transform="rotate(0 42.9 18.7)"/></svg><b>3D</b></div><div class="lbl" style="left:472.0px;top:346.6px">Walk Bump<br>Object.rlMotion</div><!--/GRID-->
<!--/PANELBODY-->
</div>
</div>
</body>
</html>
